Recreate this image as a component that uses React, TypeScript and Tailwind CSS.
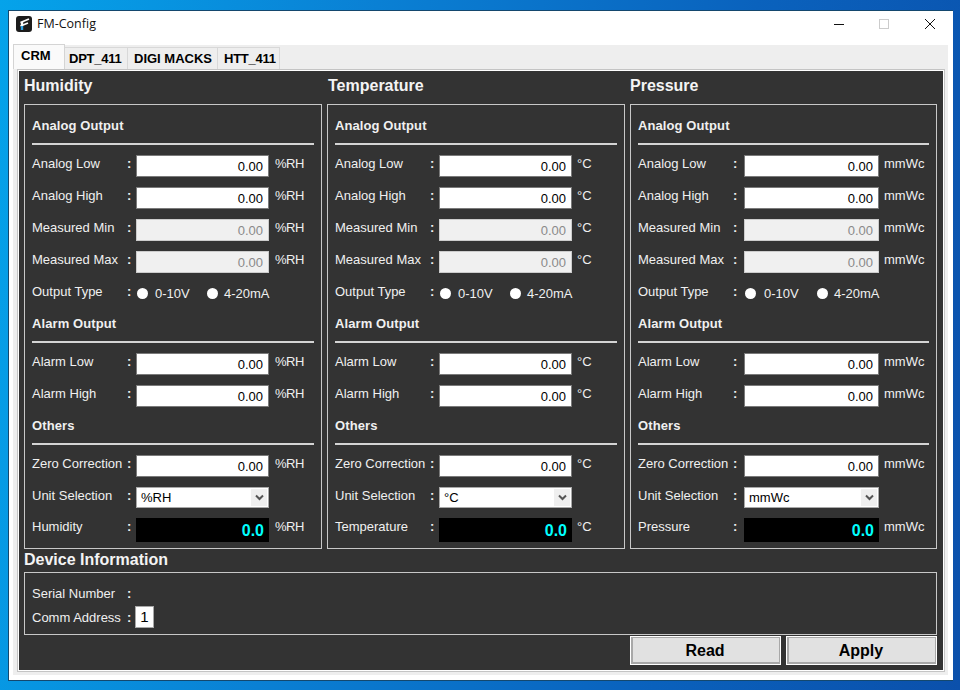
import React from "react";

type PanelProps = {
  unit: string;
  last: string;
  wide?: boolean;
  unitGap: string;
};

function Row({ label, wide, children }: { label: string; wide?: boolean; children: React.ReactNode }) {
  return (
    <div className="flex items-start">
      <div className="w-[95px] h-4 mt-[1px] leading-4 whitespace-nowrap">{label}</div>
      <div className={wide ? "w-[11px] h-4 mt-[1px] leading-4 font-bold" : "w-[9px] h-4 mt-[1px] leading-4 font-bold"}>:</div>
      {children}
    </div>
  );
}

function Field({ label, unit, wide, unitGap, disabled }: { label: string; unit: string; wide?: boolean; unitGap: string; disabled?: boolean }) {
  const w = wide ? "w-[135px]" : "w-[133px]";
  return (
    <Row label={label} wide={wide}>
      <input
        readOnly
        value="0.00"
        className={
          disabled
            ? `${w} h-[22px] border border-[#cccccc] bg-[#f0f0f0] text-[#8a8a8a] text-right pr-[5px] pt-[1px] text-[13px] outline-none`
            : `${w} h-[22px] border border-[#7a7a7a] bg-white text-black text-right pr-[5px] pt-[1px] text-[13px] outline-none`
        }
      />
      <div className={`${unitGap} h-4 mt-[1px] leading-4`}>{unit}</div>
    </Row>
  );
}

function Section({ title, heightClass }: { title: string; heightClass: string }) {
  return (
    <div className={`${heightClass} flex flex-col justify-end`}>
      <div className="font-bold leading-4 tracking-[0.1px] mb-[9px]">{title}</div>
      <div className="h-[2px] bg-[#d4d4d4]" />
    </div>
  );
}

function Panel({ unit, last, wide, unitGap }: PanelProps) {
  const w = wide ? "w-[135px]" : "w-[133px]";
  return (
    <div className="h-[445px] border border-[#c8c8c8] px-[7px] flex flex-col">
      <div className="h-[38px] flex flex-col justify-start pt-[13px]">
        <div className="font-bold leading-4 tracking-[0.1px]">Analog Output</div>
      </div>
      <div className="h-[2px] bg-[#d4d4d4]" />
      <div className="flex flex-col gap-[10px] pt-[10px]">
        <Field label="Analog Low" unit={unit} wide={wide} unitGap={unitGap} />
        <Field label="Analog High" unit={unit} wide={wide} unitGap={unitGap} />
        <Field label="Measured Min" unit={unit} wide={wide} unitGap={unitGap} disabled />
        <Field label="Measured Max" unit={unit} wide={wide} unitGap={unitGap} disabled />
      </div>
      <div className="h-[30px] pt-[10px]">
        <Row label="Output Type" wide={wide}>
          <div className="flex items-center h-[18px] pt-[3px]">
            <div className={wide ? "w-[73px] flex items-center pl-[1px]" : "w-[71px] flex items-center pl-[1px]"}>
              <div className="w-[11px] h-[11px] rounded-full bg-white" />
              <div className={wide ? "ml-[8px]" : "ml-[7px]"}>0-10V</div>
            </div>
            <div className="flex items-center">
              <div className="w-[11px] h-[11px] rounded-full bg-white" />
              <div className="ml-[6px]">4-20mA</div>
            </div>
          </div>
        </Row>
      </div>
      <Section title="Alarm Output" heightClass="h-[40px]" />
      <div className="flex flex-col gap-[10px] pt-[10px]">
        <Field label="Alarm Low" unit={unit} wide={wide} unitGap={unitGap} />
        <Field label="Alarm High" unit={unit} wide={wide} unitGap={unitGap} />
      </div>
      <Section title="Others" heightClass="h-[38px]" />
      <div className="flex flex-col gap-[10px] pt-[10px]">
        <Field label="Zero Correction" unit={unit} wide={wide} unitGap={unitGap} />
        <Row label="Unit Selection" wide={wide}>
          <div className={`${w} h-[21px] border border-[#a8a8a8] bg-white text-black flex items-center justify-between pl-[4px] pr-[1px]`}>
            <span className="pt-[1px]">{unit}</span>
            <div className="w-[16px] h-[17px] bg-[#efefef] flex items-center justify-center">
              <svg width="9" height="7" viewBox="0 0 9 7">
                <path d="M1 1.5 L4.5 5 L8 1.5" fill="none" stroke="#555555" strokeWidth="2" />
              </svg>
            </div>
          </div>
        </Row>
        <Row label={last} wide={wide}>
          <div className={`${w} h-[24px] bg-black text-[#00ffff] font-bold text-[16px] text-right pr-[5px] leading-[26px]`}>0.0</div>
          <div className={`${unitGap} h-4 mt-[1px] leading-4`}>{unit}</div>
        </Row>
      </div>
    </div>
  );
}

function Heading({ children }: { children: React.ReactNode }) {
  return <div className="text-[16px] font-bold leading-[18px] text-[#f4f4f4]">{children}</div>;
}

function ActionButton({ children }: { children: React.ReactNode }) {
  return (
    <button className="w-[151px] h-[29px] border border-white bg-white p-0">
      <span className="flex h-full w-full items-center justify-center border border-[#a8a8a8] border-b-2 border-l-2 bg-[#e1e1e1] pt-[2px] pr-[2px] text-[16px] font-bold text-black">
        {children}
      </span>
    </button>
  );
}

export default function App() {
  return (
    <div className="w-[960px] h-[690px] overflow-hidden pl-[8px] pt-[10px] bg-[linear-gradient(100deg,#05a3ea_0%,#0a80d4_35%,#0a62bd_70%,#0b50ab_100%)] font-['Liberation_Sans',Arial,sans-serif] text-[13px]">
      <div className="w-[945px] h-[671px] bg-white border-l border-t border-b border-[#14486e] flex flex-col">
        <div className="h-[34px] pb-[8px] flex items-center shrink-0">
          <svg className="ml-[7px]" width="16" height="16" viewBox="0 0 16 16">
            <rect x="0" y="0" width="16" height="16" rx="3" fill="#1c1c1c" />
            <path d="M4.5 6.5 L13 3 M4.5 10 L12 7" stroke="#ffffff" strokeWidth="1.8" fill="none" />
            <path d="M6 6 L6 10" stroke="#ffffff" strokeWidth="2.4" fill="none" />
            <path d="M6 10 L6 14" stroke="#2f9fe0" strokeWidth="2.4" fill="none" />
          </svg>
          <div className="ml-[5px] font-['Open_Sans',sans-serif] text-[12.5px] text-[#111111]">FM-Config</div>
          <div className="ml-auto flex items-center">
            <svg width="10" height="10" viewBox="0 0 10 10" className="mr-[35px]">
              <path d="M0 5.5 H10" stroke="#111111" strokeWidth="1" />
            </svg>
            <svg width="10" height="10" viewBox="0 0 10 10" className="mr-[36px]">
              <rect x="0.5" y="0.5" width="9" height="9" fill="none" stroke="#cccccc" strokeWidth="1" />
            </svg>
            <svg width="10" height="10" viewBox="0 0 10 10" className="mr-[18px]">
              <path d="M0 0 L10 10 M10 0 L0 10" stroke="#111111" strokeWidth="1" />
            </svg>
          </div>
        </div>
        <div className="ml-[4px] w-[935px] h-[630px] bg-[#eeeeee] shrink-0">
          <div className="flex items-end h-[24px] font-bold text-[13px] text-black">
            <div className="w-[52px] h-[25px] bg-[#fafafa] border-t border-l border-r border-[#d4d4d4] pl-[7px] leading-[21px] z-10">CRM</div>
            <div className="w-[63px] h-[22px] border-t border-r border-[#d8d8d8] pl-[4px] leading-[22px] tracking-[-0.25px]">DPT_411</div>
            <div className="w-[90px] h-[22px] border-t border-r border-[#d8d8d8] pl-[6px] leading-[22px] whitespace-nowrap">DIGI MACKS</div>
            <div className="w-[62px] h-[22px] border-t border-r border-[#d8d8d8] pl-[6px] leading-[22px] tracking-[-0.25px]">HTT_411</div>
          </div>
          <div className="ml-[4px] w-[928px] h-[603px] border border-[#c4c4c4] bg-white p-[1px]">
            <div className="h-full bg-[#333333] text-[#f0f0f0] px-[5px]">
              <div className="h-[33px] grid grid-cols-[298px_298px_307px] gap-x-[5px] pt-[6px]">
                <Heading>Humidity</Heading>
                <div className="pl-[1px]"><Heading>Temperature</Heading></div>
                <Heading>Pressure</Heading>
              </div>
              <div className="grid grid-cols-[298px_298px_307px] gap-x-[5px]">
                <Panel unit="%RH" last="Humidity" unitGap="ml-[6px] tracking-[-0.5px]" />
                <Panel unit="°C" last="Temperature" unitGap="ml-[5px]" />
                <Panel unit="mmWc" last="Pressure" wide unitGap="ml-[5px]" />
              </div>
              <div className="h-[23px] pt-[2px]">
                <Heading>Device Information</Heading>
              </div>
              <div className="w-[913px] h-[63px] border border-[#c8c8c8] px-[7px] pt-[12px]">
                <div className="h-[21px]">
                  <Row label="Serial Number"><span /></Row>
                </div>
                <div className="flex items-center h-[22px]">
                  <div className="w-[95px] leading-4 mt-[1px]">Comm Address</div>
                  <div className="w-[8px] leading-4 mt-[1px] font-bold">:</div>
                  <input readOnly value="1" className="w-[19px] h-[22px] border border-[#a8a8a8] bg-white text-black text-center text-[15px] outline-none" />
                </div>
              </div>
              <div className="flex justify-end gap-[5px] mt-[1px] w-[913px]">
                <ActionButton>Read</ActionButton>
                <ActionButton>Apply</ActionButton>
              </div>
            </div>
          </div>
        </div>
      </div>
    </div>
  );
}
